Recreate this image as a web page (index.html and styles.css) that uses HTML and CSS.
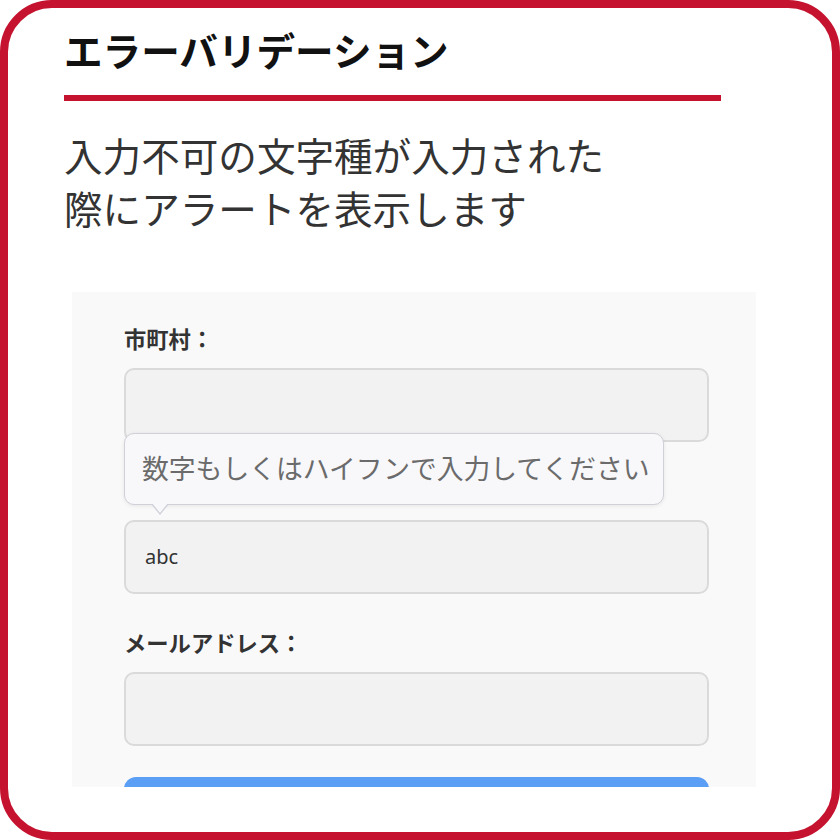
FILE: index.html
```html
<!DOCTYPE html>
<html lang="ja">
<head>
    <meta charset="UTF-8">
    <meta name="viewport" content="width=device-width, initial-scale=1.0">
    <title>エラーバリデーション</title>
    <link rel="stylesheet" href="styles.css">
</head>
<body>
    <div class="card">
        <h1 class="card-title">エラーバリデーション</h1>
        <p class="card-text">入力不可の文字種が入力された<br>際にアラートを表示します</p>

        <div class="demo">
            <div class="field">
                <label class="field-label">市町村：</label>
                <div class="field-input"></div>
            </div>

            <div class="field">
                <div class="field-label"></div>
                <div class="field-input">abc</div>
            </div>

            <div class="field">
                <label class="field-label">メールアドレス：</label>
                <div class="field-input"></div>
            </div>

            <div class="submit"></div>

            <div class="tooltip">数字もしくはハイフンで入力してください</div>
        </div>
    </div>
</body>
</html>
```

FILE: styles.css
```css
html, body {
    margin: 0;
    background-color: #fff;
}

body {
    font-family: 'Noto Sans CJK JP', 'Noto Sans', sans-serif;
}

.card {
    width: 840px;
    height: 840px;
    box-sizing: border-box;
    border: 8px solid #c4122f;
    border-radius: 52px;
    overflow: hidden;
    background-color: #fff;
}

.card-title {
    width: 657px;
    margin: 15px 0 0 56px;
    padding-bottom: 19px;
    border-bottom: 6px solid #c4122f;
    font-size: 38.6px;
    line-height: 53px;
    font-weight: 700;
    color: #111;
}

.card-text {
    margin: 27px 0 0 56px;
    font-size: 38.6px;
    line-height: 53px;
    font-weight: 400;
    color: #333;
}

.demo {
    position: relative;
    width: 684px;
    height: 495px;
    margin: 58px 0 0 64px;
    padding: 32px 0 0 52px;
    box-sizing: border-box;
    background-color: #f9f9f9;
    overflow: hidden;
}

.field {
    width: 585px;
    margin-bottom: 34px;
}

.field-label {
    display: block;
    height: 28px;
    margin-bottom: 16px;
    font-size: 22.3px;
    line-height: 28px;
    font-weight: 700;
    color: #333;
}

.field-input {
    height: 74px;
    box-sizing: border-box;
    padding-left: 19px;
    border: 2px solid #dadada;
    border-radius: 10px;
    background-color: #f2f2f2;
    font-family: 'Noto Sans', sans-serif;
    font-size: 20px;
    line-height: 70px;
    color: #333;
}

.submit {
    width: 585px;
    height: 60px;
    margin-top: -3px;
    border-radius: 12px;
    background-color: #5a9ff5;
}

.tooltip {
    position: absolute;
    left: 52px;
    top: 141px;
    width: 540px;
    height: 72px;
    box-sizing: border-box;
    padding-left: 17px;
    border: 1px solid #cfd0d8;
    border-radius: 10px;
    background-color: #f8f8fb;
    box-shadow: 0 1px 4px rgba(0, 0, 0, 0.08);
    font-size: 26.8px;
    line-height: 68px;
    color: #6b6b6b;
    white-space: nowrap;
}

.tooltip::before,
.tooltip::after {
    content: '';
    position: absolute;
    left: 26px;
    border-left: 9px solid transparent;
    border-right: 9px solid transparent;
}

.tooltip::before {
    bottom: -11px;
    border-top: 11px solid #cfd0d8;
}

.tooltip::after {
    bottom: -9px;
    left: 27px;
    border-left-width: 8px;
    border-right-width: 8px;
    border-top: 10px solid #f8f8fb;
}
```
